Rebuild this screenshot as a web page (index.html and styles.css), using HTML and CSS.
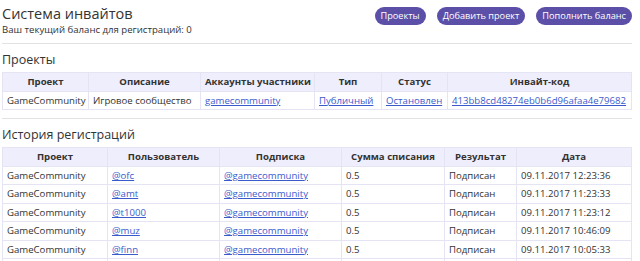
FILE: index.html
```html
<!DOCTYPE html>
<html lang="ru">
<head>
    <meta charset="UTF-8">
    <title>Система инвайтов</title>
    <link rel="stylesheet" href="styles.css">
</head>
<body>
    <div class="page">
        <div class="top">
            <div>
                <h1>Система инвайтов</h1>
                <div class="balance">Ваш текущий баланс для регистраций: 0</div>
            </div>
            <div class="actions">
                <a class="btn" href="#">Проекты</a>
                <a class="btn" href="#">Добавить проект</a>
                <a class="btn" href="#">Пополнить баланс</a>
            </div>
        </div>
        <hr>

        <h2>Проекты</h2>
        <table class="grid projects">
            <colgroup>
                <col class="c1"><col class="c2"><col class="c3"><col class="c4"><col class="c5"><col>
            </colgroup>
            <tr>
                <th>Проект</th>
                <th>Описание</th>
                <th>Аккаунты участники</th>
                <th>Тип</th>
                <th>Статус</th>
                <th>Инвайт-код</th>
            </tr>
            <tr>
                <td>GameCommunity</td>
                <td>Игровое сообщество</td>
                <td><a href="#">gamecommunity</a></td>
                <td><a href="#">Публичный</a></td>
                <td><a href="#">Остановлен</a></td>
                <td><a href="#">413bb8cd48274eb0b6d96afaa4e79682</a></td>
            </tr>
        </table>
        <hr>

        <h2>История регистраций</h2>
        <table class="grid history">
            <colgroup>
                <col class="c1"><col class="c2"><col class="c3"><col class="c4"><col class="c5"><col>
            </colgroup>
            <tr>
                <th>Проект</th>
                <th>Пользователь</th>
                <th>Подписка</th>
                <th>Сумма списания</th>
                <th>Результат</th>
                <th>Дата</th>
            </tr>
            <tr><td>GameCommunity</td><td><a href="#">@ofc</a></td><td><a href="#">@gamecommunity</a></td><td>0.5</td><td>Подписан</td><td>09.11.2017 12:23:36</td></tr>
            <tr><td>GameCommunity</td><td><a href="#">@amt</a></td><td><a href="#">@gamecommunity</a></td><td>0.5</td><td>Подписан</td><td>09.11.2017 11:23:33</td></tr>
            <tr><td>GameCommunity</td><td><a href="#">@t1000</a></td><td><a href="#">@gamecommunity</a></td><td>0.5</td><td>Подписан</td><td>09.11.2017 11:23:12</td></tr>
            <tr><td>GameCommunity</td><td><a href="#">@muz</a></td><td><a href="#">@gamecommunity</a></td><td>0.5</td><td>Подписан</td><td>09.11.2017 10:46:09</td></tr>
            <tr><td>GameCommunity</td><td><a href="#">@finn</a></td><td><a href="#">@gamecommunity</a></td><td>0.5</td><td>Подписан</td><td>09.11.2017 10:05:33</td></tr>
            <tr class="empty"><td></td><td></td><td></td><td></td><td></td><td></td></tr>
        </table>
    </div>
</body>
</html>
```

FILE: styles.css
```css
body {
    margin: 0;
    font-family: "Open Sans", "Noto Sans", sans-serif;
    font-size: 9.6px;
    color: #333;
    background: #fff;
}
.page {
    padding: 0 8px 0 2px;
}
.top {
    display: flex;
    justify-content: space-between;
    align-items: flex-start;
    padding-top: 4px;
    height: 39px;
}
h1 {
    margin: 0;
    font-size: 14.5px;
    font-weight: normal;
    line-height: 20px;
}
.balance {
    line-height: 12px;
}
.actions {
    display: flex;
    gap: 11px;
    padding-top: 3px;
}
.btn {
    display: block;
    padding: 0 6px;
    height: 18px;
    line-height: 18px;
    border-radius: 9px;
    background-color: #5b4fa7;
    color: #fff;
    text-decoration: none;
    font-size: 9.2px;
}
hr {
    margin: 0;
    border: none;
    border-top: 1px solid #e2e2e2;
}
h2 {
    margin: 0;
    padding: 8px 0 4px;
    font-size: 12.5px;
    font-weight: normal;
    line-height: 16px;
}
.grid {
    width: 100%;
    table-layout: fixed;
    border-collapse: collapse;
    margin-bottom: 8px;
}
.grid th,
.grid td {
    border: 1px solid #e4e4f4;
    padding: 2px 4px;
    line-height: 13.5px;
    text-align: left;
    white-space: nowrap;
    overflow: hidden;
}
.grid th {
    background-color: #eeeefc;
    text-align: center;
    font-weight: bold;
}
.grid a {
    color: #3b5bcc;
}
.grid .empty td {
    height: 14px;
}
.projects .c1 { width: 86px; }
.projects .c2 { width: 112px; }
.projects .c3 { width: 114px; }
.projects .c4 { width: 67px; }
.projects .c5 { width: 66px; }
.history .c1 { width: 105px; }
.history .c2 { width: 112px; }
.history .c3 { width: 122px; }
.history .c4 { width: 103px; }
.history .c5 { width: 72px; }
```
